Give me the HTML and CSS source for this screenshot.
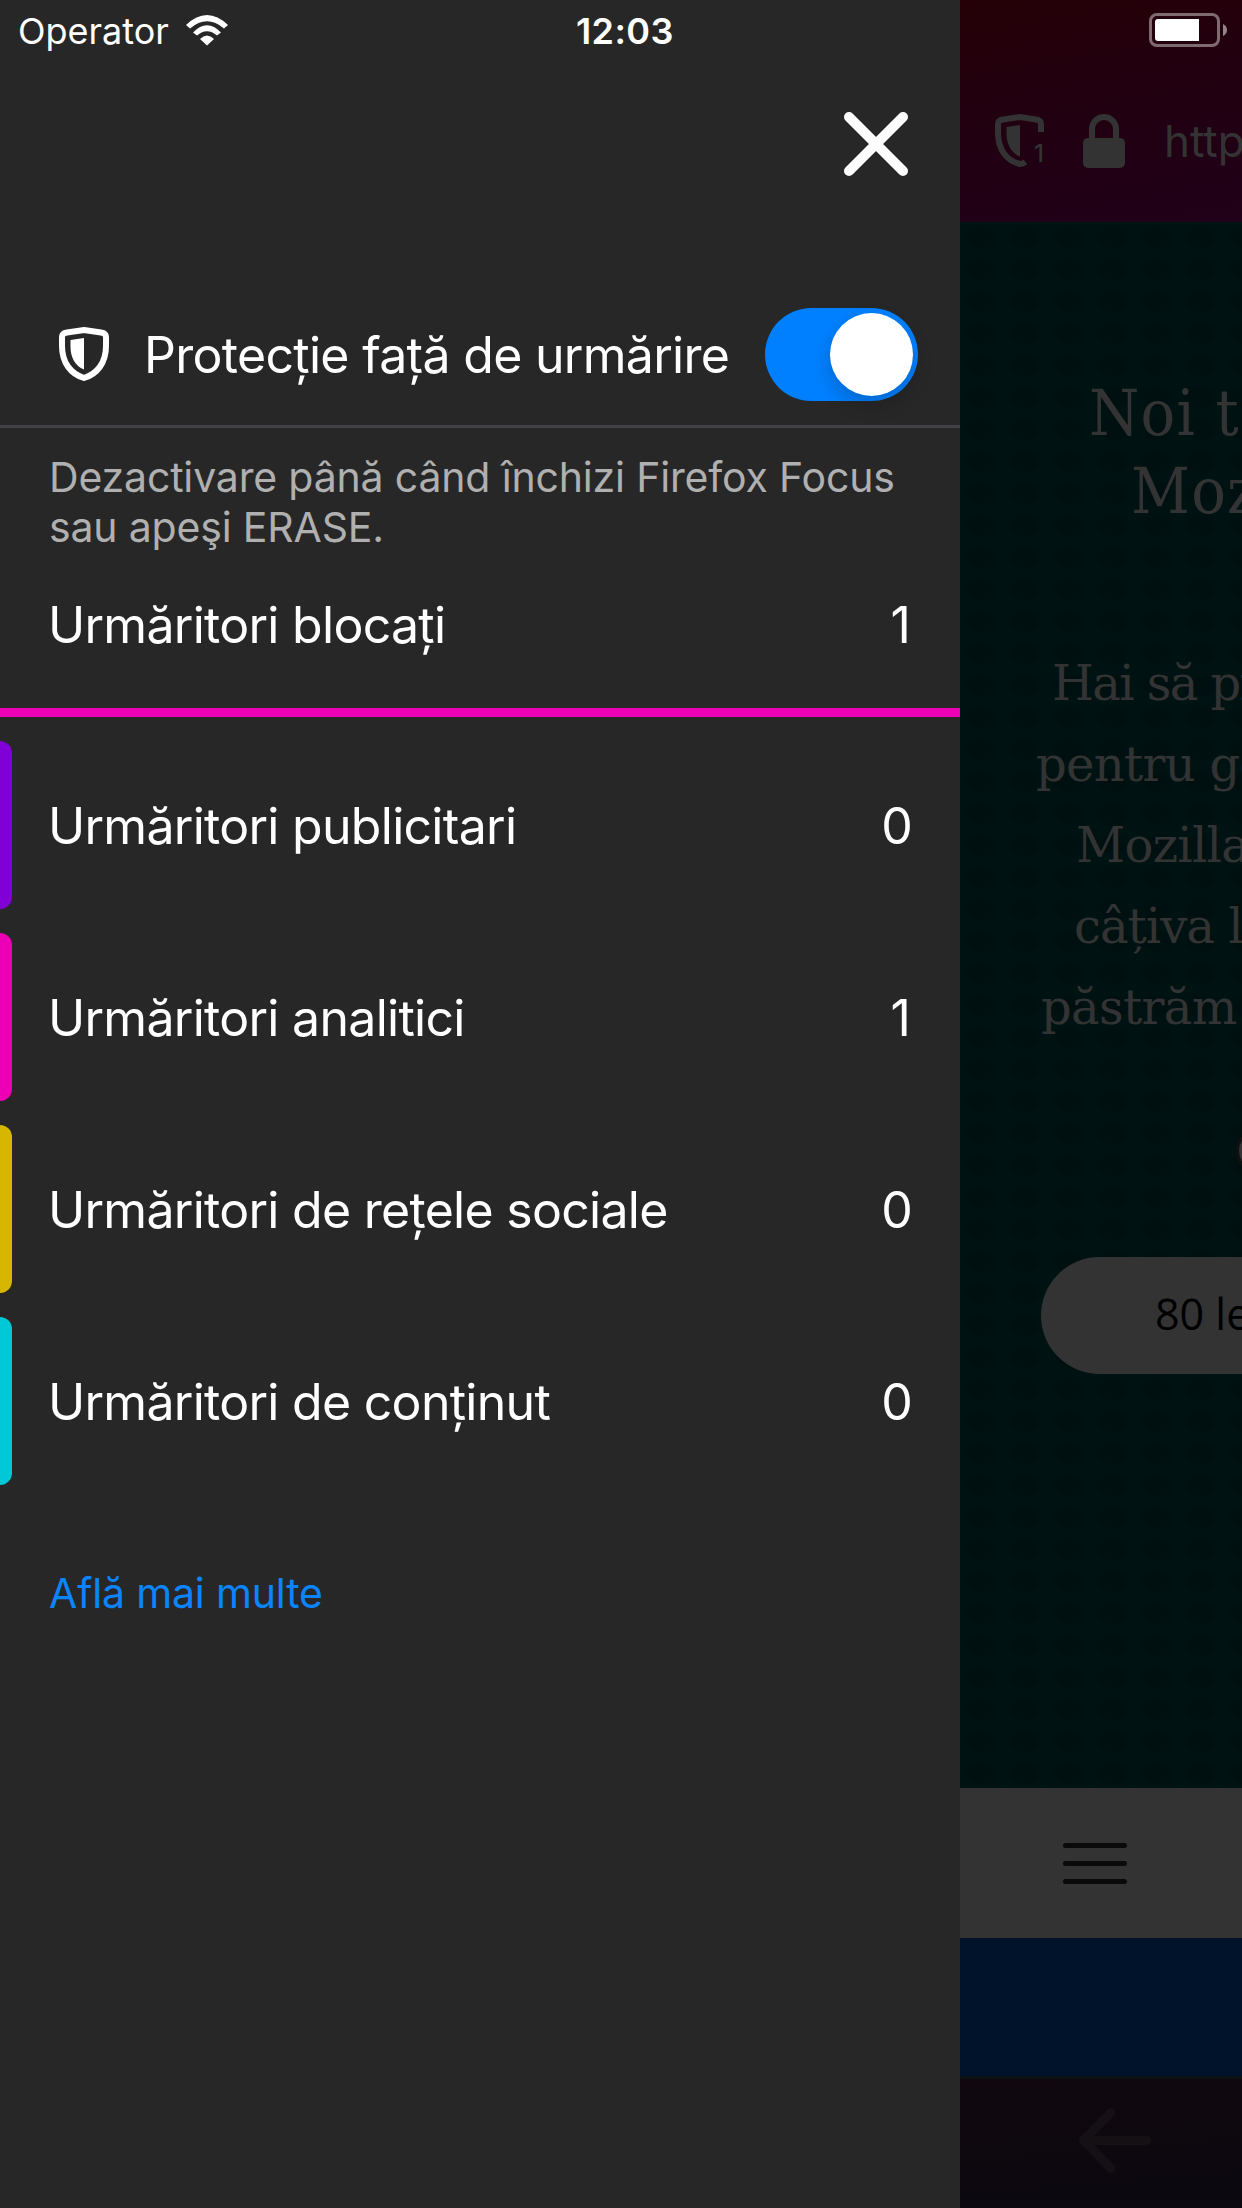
FILE: index.html
```html
<!DOCTYPE html>
<html>
<head>
<meta charset="utf-8">
<title>Firefox Focus</title>
<link rel="stylesheet" href="styles.css">
</head>
<body>
<div class="screen">
  <aside class="drawer">
    <header class="drawer-head">
      <button class="close" aria-label="Închide"><svg width="64" height="64" viewBox="0 0 64 64"><path d="M5 5L59 59M59 5L5 59" stroke="#fff" stroke-width="10" stroke-linecap="round"/></svg></button>
    </header>
    <section class="protection">
      <svg class="shield" width="50" height="54" viewBox="0 0 50 54"><path d="M25 3L42 5.500Q47 6.200 47 10V19C47 36 38 47 25 51C12 47 3 36 3 19V10Q3 6.200 8 5.500Z" fill="none" stroke="#fff" stroke-width="6"/><path d="M25 11V42.500C16 39 11.500 30 11.500 20V13Z" fill="#fff"/></svg>
      <span class="protection-label">Protecție față de urmărire</span>
      <span class="switch"><i class="knob"></i></span>
    </section>
    <p class="hint">Dezactivare până când închizi Firefox Focus<br>sau apeşi ERASE.</p>
    <div class="total"><span>Urmăritori blocați</span><span class="one">1</span></div>
    <ul class="trackers">
      <li class="ads"><span class="name">Urmăritori publicitari</span><span>0</span></li>
      <li class="analytics"><span class="name">Urmăritori analitici</span><span class="one">1</span></li>
      <li class="social"><span class="name">Urmăritori de rețele sociale</span><span>0</span></li>
      <li class="content"><span class="name">Urmăritori de conținut</span><span>0</span></li>
    </ul>
    <a class="more">Află mai multe</a>
  </aside>
  <main class="page">
    <div class="urlbar">
      <svg width="50" height="54" viewBox="0 0 50 54" fill="none"><path d="M46 18V10Q46 6.200 41 5.500L25 3L8 5.500Q3 6.200 3 10V19C3 36 12 47 25 50Q28 50 30.500 48" stroke="#333" stroke-width="6"/><path d="M25 11V42.500C16 39 11.500 30 11.500 20V13Z" fill="#333"/><text class="count" x="39" y="48">1</text></svg>
      <svg class="lock" width="42" height="54" viewBox="0 0 42 54"><path d="M9 27V15a12 12 0 0 1 24 0V27" fill="none" stroke="#333" stroke-width="6"/><rect y="24" width="42" height="30" rx="5" fill="#333"/></svg>
      <span class="url">http</span>
    </div>
    <div class="site">
      <div class="headline"><div class="h1">Noi t</div><div class="h2">Moz</div></div>
      <div class="copy"><div class="c1">Hai să pr</div><div class="c2">pentru ge</div><div class="c3">Mozilla</div><div class="c4">câțiva l</div><div class="c5">păstrăm</div></div>
      <div class="radio"></div>
      <div class="amount">80 le</div>
    </div>
    <div class="menu"><svg width="64" height="41" viewBox="0 0 64 41"><path d="M2.500 2.500H61.500M2.500 20.500H61.500M2.500 38.500H61.500" stroke="#0a0a0a" stroke-width="5" stroke-linecap="round"/></svg></div>
    <div class="banner"></div>
    <nav class="toolbar"><svg width="72" height="65" viewBox="0 0 72 65"><path d="M32 4.500L4.500 32.500L32 60.500M5 32.500H68" fill="none" stroke="#141014" stroke-width="9" stroke-linecap="round" stroke-linejoin="round"/></svg></nav>
  </main>
  <div class="status">
    <span class="carrier">Operator</span>
    <svg class="wifi" width="42" height="31" viewBox="0 0 42 31" fill="#fff"><path d="M0 10Q21 -10 42 10L38 13.500Q21 -1 4 13.500Z"/><path d="M7 17.500Q21 3 35 17.500L31 20.500Q21 12 11 20.500Z"/><path d="M14 24Q21 17 28 24L21 30.500Z"/></svg>
    <span class="time">12:03</span>
    <svg class="battery" width="80" height="34" viewBox="0 0 80 34"><rect x="1.500" y="1.500" width="68" height="31" rx="6.500" fill="none" stroke="#7f6a70" stroke-width="3"/><path d="M9 6H50V28H9Q6 28 6 25V9Q6 6 9 6Z" fill="#fff"/><path d="M74 11Q78 13 78 17T74 23Z" fill="#93848a"/></svg>
  </div>
</div>
</body>
</html>
```
FILE: styles.css
```css
* { box-sizing: border-box; }
body { margin: 0; background: #272727; font-family: Inter, "Noto Sans", sans-serif; color: #fff; }
.screen { position: relative; display: flex; width: 1242px; height: 2208px; overflow: hidden; }
.drawer { width: 960px; height: 2208px; background: #272727; flex: none; }
.drawer-head { height: 284px; padding: 112px 52px 0 0; display: flex; justify-content: flex-end; align-items: flex-start; }
.close { border: 0; padding: 0; background: none; display: block; width: 64px; height: 64px; }
svg { display: block; flex: none; }
.protection { height: 144px; padding: 0 42px 0 59px; display: flex; align-items: center; border-bottom: 3px solid #424147; }
.shield { margin-bottom: 2px; }
.protection-label { margin-left: 35px; font-size: 50px; white-space: nowrap; flex: 1; letter-spacing: -.7px; }
.switch { width: 153px; height: 93px; border-radius: 47px; background: #0080ff; padding: 5px; display: flex; justify-content: flex-end; }
.knob { width: 83px; height: 83px; border-radius: 50%; background: #fff; box-shadow: 0 8px 20px rgba(0,0,0,.2); }
.hint { margin: 0; padding: 24px 0 0 49px; height: 146px; font-size: 41px; line-height: 50px; color: #b0b0b0; white-space: nowrap; letter-spacing: -.17px; }
.total { height: 143px; padding: 21px 48px 0 48px; border-bottom: 9px solid #ed00b5; display: flex; justify-content: space-between; font-size: 50px; line-height: 60px; letter-spacing: -.72px; }
.trackers { list-style: none; margin: 24px 0 0; padding: 0; display: grid; gap: 24px; }
.trackers li { height: 168px; padding: 0 48px 0 36px; display: flex; align-items: center; justify-content: space-between; font-size: 50px; line-height: 60px; letter-spacing: -.72px; }
.trackers li::before { content: ""; width: 12px; height: 168px; border-radius: 0 12px 12px 0; margin-left: -36px; background: var(--tone); }
.trackers span { padding-top: 2px; }
.trackers .name { flex: 1; margin-left: 36px; }
.one { margin-right: 2px; }
.ads { --tone: #8000d7; }
.analytics { --tone: #ed00b5; }
.social { --tone: #d7b600; }
.content { --tone: #00c8d7; }
.more { display: block; margin: 83px 0 0 49px; font-size: 41px; line-height: 50px; color: #0a84ff; letter-spacing: -.15px; }
.page { width: 282px; flex: none; overflow: hidden; color: #333; }
.urlbar { height: 222px; padding: 114px 0 0 35px; display: flex; align-items: flex-start; background: linear-gradient(170deg, #240006, #210012 55%, #200018); }
.count { font: 500 24px Inter, sans-serif; fill: #333; }
.lock { margin-left: 38px; }
.url { margin: 0 0 0 39px; font-size: 44px; line-height: 54px; }
.site { height: 1566px; background: radial-gradient(ellipse, #001010 0 35%, #001313 70%) -1px 0 / 44px 32px; white-space: nowrap; padding-top: 152px; }
.headline { height: 243px; font-family: "DejaVu Serif Condensed", "DejaVu Serif", serif; font-stretch: condensed; font-size: 64px; line-height: 78px; letter-spacing: 1.2px; }
.h1 { padding-left: 129px; }
.h2 { padding-left: 171px; }
.copy { height: 520px; padding-top: 26px; font-family: "DejaVu Serif", serif; font-size: 48px; line-height: 81px; letter-spacing: -.7px; }
.c1 { padding-left: 92px; letter-spacing: -1.6px; }
.c2 { padding-left: 76px; }
.c3 { padding-left: 116px; }
.c4 { padding-left: 114px; letter-spacing: -1px; }
.c5 { padding-left: 81px; }
.radio { width: 44px; height: 44px; margin: -8px 0 84px 276px; border: 3px solid #111; border-radius: 50%; background: #333; }
.amount { width: 500px; height: 117px; margin-left: 81px; padding-left: 114px; border-radius: 59px; background: #333; color: #000; font-family: "Open Sans", sans-serif; font-size: 43px; line-height: 113px; }
.menu { height: 150px; padding: 55px 0 0 103px; background: #333; }
.banner { height: 138px; background: #00132a; }
.toolbar { height: 132px; border-top: 3px solid #0d1115; padding: 29px 0 0 119px; background: linear-gradient(175deg, #10080e, #0b080f); }
.status { position: absolute; inset: 0 0 auto 0; height: 62px; }
.status > * { position: absolute; }
.carrier { left: 18px; top: 9px; font-size: 36px; line-height: 44px; }
.wifi { left: 186px; top: 15px; }
.time { left: 576px; top: 9px; font-size: 36px; line-height: 44px; font-weight: 600; letter-spacing: .4px; }
.battery { left: 1149px; top: 13px; }
```
